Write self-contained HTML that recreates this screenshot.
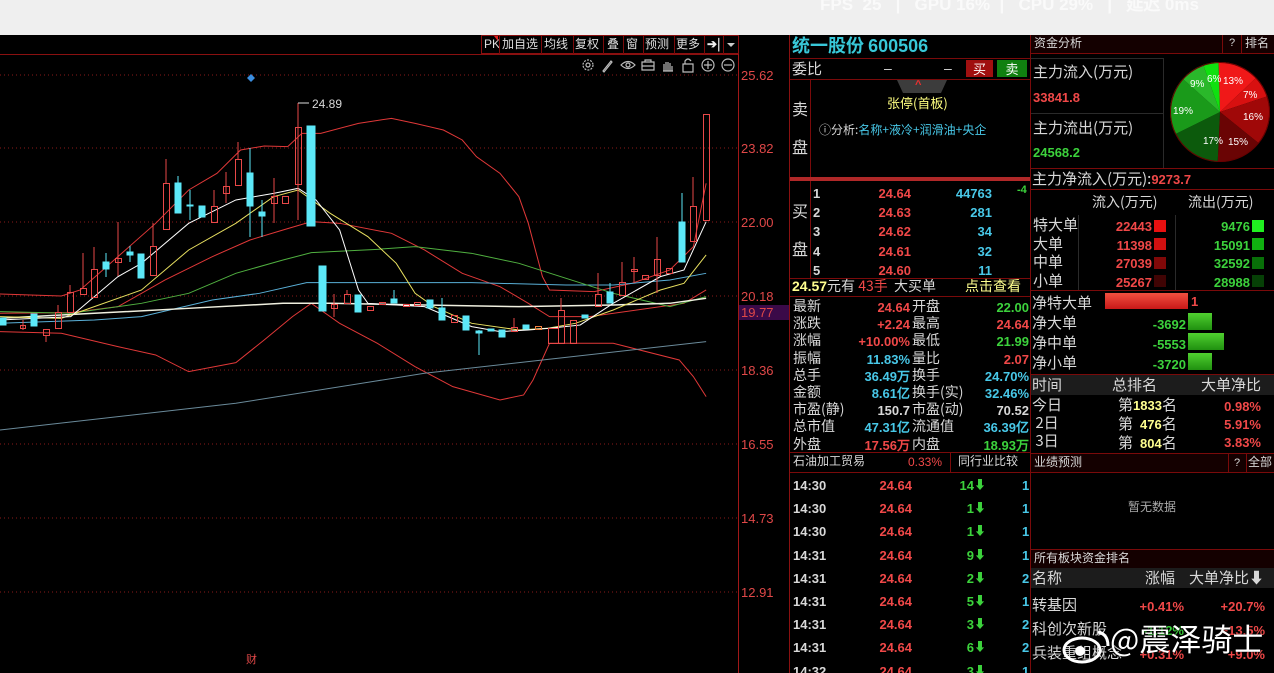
<!DOCTYPE html>
<html style="width:1274px;height:673px;overflow:hidden"><head><meta charset="utf-8">
<style>
*{margin:0;padding:0;box-sizing:border-box}
body{width:1274px;height:673px;overflow:hidden;background:#000;font-family:"Liberation Sans","Noto Sans CJK SC",sans-serif;position:relative;color:#d0d0d0}
.t{position:absolute;white-space:nowrap;line-height:1}
.c{font-family:"Noto Sans CJK SC","WenQuanYi Zen Hei",sans-serif}
.n{font-family:"Liberation Sans",sans-serif;font-weight:bold}
.r{color:#f04848}.g{color:#3cd23c}.cy{color:#48c8e8}.y{color:#ffff90}.w{color:#d8d8d8}
.hl{position:absolute;height:1px;background:#7a0a0a}
.vl{position:absolute;width:1px;background:#7a0a0a}
.ra{text-align:right}
.tb{position:absolute;top:38px;font-size:12px;color:#ddd;line-height:1;white-space:nowrap;font-family:"Noto Sans CJK SC",sans-serif}
</style></head><body>
<div style="position:absolute;left:0;top:0;width:1274px;height:35px;background:#efefef"></div>
<div class="t n" style="left:820px;top:-4px;font-size:17px;color:#fafafa">FPS &nbsp;25 &nbsp; | &nbsp; GPU 16% &nbsp;| &nbsp; CPU 29% &nbsp; | &nbsp; 延迟 0ms</div>

<!-- chart -->
<svg style="position:absolute;left:0;top:35px" width="790" height="638" viewBox="0 35 790 638">
<g stroke="#8a1a1a" stroke-dasharray="1 3" stroke-width="1">
<line x1="0" y1="75" x2="738" y2="75"/><line x1="0" y1="148" x2="738" y2="148"/><line x1="0" y1="222" x2="738" y2="222"/><line x1="0" y1="296" x2="738" y2="296"/><line x1="0" y1="370" x2="738" y2="370"/><line x1="0" y1="444" x2="738" y2="444"/><line x1="0" y1="518" x2="738" y2="518"/><line x1="0" y1="592" x2="738" y2="592"/>
</g>
<line x1="0" y1="54.5" x2="738" y2="54.5" stroke="#8a1010"/>
<line x1="738.5" y1="35" x2="738.5" y2="673" stroke="#a01818"/>
<g fill="none" stroke-width="1" transform="translate(0,90) scale(0.4717,0.3333)">
<polyline vector-effect="non-scaling-stroke" stroke="#e03838" points="0,612 130,618 170,600 250,500 330,400 400,300 460,250 510,180 560,168 610,170 640,130 680,130 760,100 830,85 880,100 940,120 980,150 1010,200 1060,250 1100,320 1120,400 1150,560 1165,600 1260,605 1340,580 1420,540 1470,470 1497,280"/>
<polyline vector-effect="non-scaling-stroke" stroke="#e03838" points="0,670 150,668 250,650 350,570 450,500 530,450 600,420 660,395 720,400 830,430 900,480 980,550 1060,590 1120,640 1165,680 1250,680 1350,660 1450,640 1497,600"/>
<polyline vector-effect="non-scaling-stroke" stroke="#e03838" points="0,725 130,730 250,770 330,795 400,845 500,818 560,750 620,680 660,640 720,700 800,760 880,830 960,890 1060,930 1110,915 1130,870 1165,760 1300,760 1440,810 1470,860 1497,920"/>
<polyline vector-effect="non-scaling-stroke" stroke="#6a8a9a" points="0,1020 500,940 900,850 1150,810 1497,755"/>
<polyline vector-effect="non-scaling-stroke" stroke="#5ab0d8" points="0,700 200,690 300,680 450,630 550,610 650,578 1000,578 1200,585 1300,585 1420,570 1497,550"/>
<polyline vector-effect="non-scaling-stroke" stroke="#50b040" points="0,665 150,670 300,640 400,610 500,550 600,510 660,488 800,478 880,470 1000,490 1100,520 1200,565 1300,610 1420,650 1497,620"/>
<polyline vector-effect="non-scaling-stroke" stroke="#f0f0e0" stroke-width="1.5" points="0,685 200,670 400,655 600,640 700,640 900,645 1100,650 1300,645 1420,640 1497,625"/>
<polyline vector-effect="non-scaling-stroke" stroke="#e8e060" points="0,680 130,685 200,650 300,600 400,480 500,400 580,320 632,300 700,370 780,440 840,520 880,610 920,650 1000,700 1100,720 1160,715 1220,700 1300,660 1400,600 1450,580 1497,495"/>
<polyline vector-effect="non-scaling-stroke" stroke="#ffffff" points="0,690 150,680 250,560 300,520 400,400 500,330 580,310 632,295 670,330 720,420 760,600 780,640 900,650 950,680 1000,710 1060,725 1120,720 1165,715 1230,705 1300,640 1400,560 1450,540 1497,395"/>
</g>
<g stroke="#e84848" fill="none">
<line x1="23" y1="320" x2="23" y2="330"/><rect x="20.5" y="325.5" width="5" height="3"/>
<rect x="43.5" y="329.5" width="6" height="6"/><line x1="46" y1="335" x2="46" y2="342"/>
<rect x="55.5" y="312.5" width="6" height="16"/><line x1="58" y1="305" x2="58" y2="312"/>
<rect x="67.5" y="292.5" width="6" height="20"/><line x1="70" y1="285" x2="70" y2="292"/>
<rect x="80.5" y="288.5" width="6" height="6"/><line x1="83" y1="253" x2="83" y2="288"/>
<rect x="91.5" y="269.5" width="6" height="28"/><line x1="94" y1="247" x2="94" y2="269"/>
<rect x="115.5" y="258.5" width="6" height="4"/><line x1="118" y1="222" x2="118" y2="276"/>
<rect x="150.5" y="246.5" width="6" height="29"/><line x1="153" y1="223" x2="153" y2="246"/>
<rect x="163.5" y="183.5" width="6" height="46"/><line x1="166" y1="159" x2="166" y2="183"/>
<rect x="211.5" y="206.5" width="6" height="16"/><line x1="214" y1="190" x2="214" y2="206"/>
<rect x="223.5" y="186.5" width="6" height="7"/><line x1="226" y1="172" x2="226" y2="203"/>
<rect x="235.5" y="159.5" width="6" height="26"/><line x1="238" y1="142" x2="238" y2="159"/>
<rect x="271.5" y="196.5" width="6" height="7"/><line x1="274" y1="178" x2="274" y2="223"/>
<rect x="282.5" y="196.5" width="6" height="7"/>
<rect x="295.5" y="127.5" width="6" height="57"/><line x1="298" y1="103" x2="298" y2="220"/>
<rect x="331.5" y="304.5" width="6" height="4"/><line x1="334" y1="294" x2="334" y2="317"/>
<rect x="344.5" y="294.5" width="6" height="9"/><line x1="347" y1="290" x2="347" y2="294"/>
<rect x="367.5" y="306.5" width="6" height="4"/>
<rect x="379.5" y="302.5" width="6" height="2"/>
<rect x="403.5" y="304.5" width="6" height="2"/>
<rect x="414.5" y="302.5" width="6" height="3"/>
<rect x="451.5" y="315.5" width="6" height="7"/>
<rect x="511.5" y="327.5" width="6" height="4"/><line x1="514" y1="318" x2="514" y2="327"/>
<rect x="535.5" y="326.5" width="6" height="3" stroke="#f08040"/>
<rect x="548.5" y="328.5" width="10" height="15"/>
<rect x="558.5" y="310.5" width="6" height="33"/><line x1="561" y1="298" x2="561" y2="310"/>
<rect x="570.5" y="320.5" width="6" height="23"/>
<rect x="595.5" y="294.5" width="6" height="12"/><line x1="598" y1="273" x2="598" y2="294"/>
<rect x="619.5" y="282.5" width="6" height="13"/><line x1="622" y1="262" x2="622" y2="282"/>
<rect x="631.5" y="269.5" width="6" height="2"/><line x1="634" y1="257" x2="634" y2="283"/>
<rect x="642.5" y="275.5" width="6" height="4"/>
<rect x="654.5" y="259.5" width="6" height="16"/><line x1="657" y1="237" x2="657" y2="293"/>
<rect x="666.5" y="268.5" width="6" height="5"/>
<rect x="690.5" y="206.5" width="6" height="35"/><line x1="693" y1="177" x2="693" y2="206"/>
<rect x="703.5" y="114.5" width="6" height="106"/>
</g>
<g fill="#5ce8f8" stroke="#5ce8f8">
<rect x="0" y="318" width="6" height="7"/>
<rect x="31" y="314" width="6" height="12"/>
<line x1="106" y1="253" x2="106" y2="277"/><rect x="103" y="262" width="6" height="7"/>
<line x1="130" y1="246" x2="130" y2="262"/><rect x="127" y="252" width="6" height="3"/>
<rect x="138" y="254" width="6" height="24"/>
<line x1="178" y1="176" x2="178" y2="213"/><rect x="175" y="183" width="6" height="30"/>
<line x1="190" y1="190" x2="190" y2="220"/><rect x="187" y="205" width="6" height="1"/>
<rect x="199" y="206" width="6" height="11"/>
<line x1="250" y1="148" x2="250" y2="237"/><rect x="247" y="173" width="6" height="33"/>
<line x1="262" y1="200" x2="262" y2="237"/><rect x="259" y="212" width="6" height="4"/>
<rect x="307" y="126" width="8" height="100"/>
<rect x="319" y="266" width="7" height="45"/>
<rect x="355" y="295" width="6" height="17"/>
<line x1="394" y1="290" x2="394" y2="303"/><rect x="391" y="299" width="6" height="4"/>
<rect x="427" y="300" width="6" height="8"/>
<line x1="442" y1="298" x2="442" y2="320"/><rect x="439" y="308" width="6" height="12"/>
<rect x="463" y="316" width="6" height="14"/>
<line x1="479" y1="330" x2="479" y2="355"/><rect x="476" y="331" width="6" height="2"/>
<rect x="488" y="329" width="6" height="2"/>
<rect x="499" y="330" width="6" height="7"/>
<rect x="523" y="325" width="6" height="4"/>
<rect x="582" y="315" width="6" height="3"/>
<line x1="610" y1="283" x2="610" y2="303"/><rect x="607" y="292" width="6" height="11"/>
<line x1="682" y1="193" x2="682" y2="262"/><rect x="679" y="222" width="6" height="40"/>
</g>
<line x1="298" y1="103" x2="309" y2="103" stroke="#ddd"/>
<text x="312" y="108" fill="#d8d8d8" font-size="12" font-family="Liberation Sans">24.89</text>
<path d="M251 74 l4 4 l-4 4 l-4 -4z" fill="#3a8ee0"/>
<g font-family="Liberation Sans" font-size="13" fill="#e04848">
<text x="741" y="80">25.62</text><text x="741" y="153">23.82</text><text x="741" y="227">22.00</text><text x="741" y="301">20.18</text><text x="741" y="375">18.36</text><text x="741" y="449">16.55</text><text x="741" y="523">14.73</text><text x="741" y="597">12.91</text>
</g>
<rect x="739" y="305" width="50" height="15" fill="#3a0a48"/>
<text x="741" y="317" fill="#e04848" font-size="13" font-family="Liberation Sans">19.77</text>
<text x="246" y="663" fill="#e04848" font-size="11" font-family="Noto Sans CJK SC">财</text>
<g fill="none" stroke="#bbb" stroke-width="1.2">
<circle cx="588" cy="65" r="5" stroke-dasharray="2 1.2"/><circle cx="588" cy="65" r="2"/>
<path d="M603 71 l8 -10 l1 1 l-8 10z"/>
<path d="M621 65 q7 -7 14 0 q-7 7 -14 0z"/><circle cx="628" cy="65" r="2"/>
<path d="M642 62 h12 v8 h-12z M645 62 v-2 h6 v2 M642 66 h12"/>
<path d="M664 71 v-7 M666 71 v-9 M668 71 v-9 M670 71 v-8 M672 71 v-5 M663 71 h10"/>
<path d="M683 64 h10 v8 h-10z M685 64 v-3 q3 -4 6 0"/>
<circle cx="708" cy="65" r="6"/><path d="M704 65 h8 M708 61 v8"/>
<circle cx="728" cy="65" r="6"/><path d="M724 65 h8"/>
</g>
</svg>
<!-- toolbar -->
<div style="position:absolute;left:481px;top:35px;width:258px;height:19px;border:1px solid #8a1010;background:#000"></div>
<div class="tb" style="left:484px;font-family:'Liberation Sans',sans-serif">PK</div>
<div class="tb" style="left:502px">加自选</div>
<div class="tb" style="left:544px">均线</div>
<div class="tb" style="left:575px">复权</div>
<div class="tb" style="left:607px">叠</div>
<div class="tb" style="left:626px">窗</div>
<div class="tb" style="left:645px">预测</div>
<div class="tb" style="left:676px">更多</div>
<div class="tb" style="left:707px;font-weight:bold;color:#eee">➔|</div>
<div style="position:absolute;left:494px;top:36px;width:0;height:0;border-left:4px solid transparent;border-top:5px solid #e02020"></div>
<div class="vl" style="left:499px;top:36px;height:18px"></div><div class="vl" style="left:541px;top:36px;height:18px"></div><div class="vl" style="left:573px;top:36px;height:18px"></div><div class="vl" style="left:603px;top:36px;height:18px"></div><div class="vl" style="left:623px;top:36px;height:18px"></div><div class="vl" style="left:643px;top:36px;height:18px"></div><div class="vl" style="left:674px;top:36px;height:18px"></div><div class="vl" style="left:704px;top:36px;height:18px"></div><div class="vl" style="left:723px;top:36px;height:18px"></div>
<div style="position:absolute;left:727px;top:43px;border-left:4px solid transparent;border-right:4px solid transparent;border-top:4px solid #ccc"></div>

<!-- left quote panel -->
<div class="vl" style="left:789px;top:35px;height:638px;background:#8a1010"></div>
<div class="vl" style="left:1030px;top:35px;height:638px"></div>
<div class="t c" style="left:792px;top:36px;font-size:18px;font-weight:bold;color:#38c8d8">统一股份 <span class="n">600506</span></div>
<div class="hl" style="left:790px;top:58px;width:240px"></div>
<div class="t c w" style="left:792px;top:61px;font-size:15px">委比</div>
<div class="t w" style="left:884px;top:61px;font-size:14px">–</div><div class="t w" style="left:944px;top:61px;font-size:14px">–</div>
<div class="t c" style="left:966px;top:60px;width:27px;height:17px;background:#a01010;color:#fff;font-size:13px;text-align:center;padding-top:2px">买</div>
<div class="t c" style="left:997px;top:60px;width:30px;height:17px;background:#108010;color:#fff;font-size:13px;text-align:center;padding-top:2px">卖</div>
<div class="hl" style="left:790px;top:79px;width:240px"></div>
<div class="vl" style="left:810px;top:79px;height:98px"></div>
<div class="t c w" style="left:792px;top:100px;font-size:16px">卖</div><div class="t c w" style="left:792px;top:138px;font-size:16px">盘</div>
<div style="position:absolute;left:897px;top:80px;width:50px;height:0;border-top:13px solid #3c3c3c;border-left:6px solid transparent;border-right:6px solid transparent"></div>
<div class="t" style="left:915px;top:80px;font-size:11px;color:#f03030;font-weight:bold">^</div>
<div class="t c" style="left:887px;top:96px;font-size:13px;color:#ffff80">张停(首板)</div>
<div class="t c" style="left:819px;top:124px;font-size:12px"><span class="w">ⓘ分析:</span><span class="cy">名称+液冷+润滑油+央企</span></div>
<div style="position:absolute;left:790px;top:177px;width:240px;height:4px;background:#b02828"></div>
<div class="vl" style="left:810px;top:181px;height:97px"></div>
<div class="t c w" style="left:792px;top:202px;font-size:16px">买</div><div class="t c w" style="left:792px;top:240px;font-size:16px">盘</div>
<div class="t n w" style="left:813px;top:184px;font-size:13px;line-height:19.2px">1<br>2<br>3<br>4<br>5</div>
<div class="t n r ra" style="left:850px;top:184px;width:61px;font-size:13px;line-height:19.2px">24.64<br>24.63<br>24.62<br>24.61<br>24.60</div>
<div class="t n cy ra" style="left:930px;top:184px;width:62px;font-size:13px;line-height:19.2px">44763<br>281<br>34<br>32<br>11</div>
<div class="t n g" style="left:1017px;top:185px;font-size:11px">-4</div>
<div class="hl" style="left:790px;top:278px;width:240px"></div>
<div class="t c" style="left:792px;top:279px;font-size:14px"><span class="y n">24.57</span><span class="w">元有</span> <span class="r">43手</span> <span class="w">&nbsp;大买单</span></div>
<div class="t c y" style="left:965px;top:279px;font-size:14px">点击查看</div>
<div class="hl" style="left:790px;top:296px;width:240px"></div>
<div class="t c w" style="left:793px;top:298px;font-size:14px;line-height:17.2px">最新<br>涨跌<br>涨幅<br>振幅<br>总手<br>金额<br>市盈(静)<br>总市值<br>外盘</div>
<div class="t n ra" style="left:840px;top:299px;width:70px;font-size:13px;line-height:17.2px"><span class="r">24.64</span><br><span class="r">+2.24</span><br><span class="r">+10.00%</span><br><span class="cy">11.83%</span><br><span class="cy">36.49万</span><br><span class="cy">8.61亿</span><br><span class="w">150.7</span><br><span class="cy">47.31亿</span><br><span class="r">17.56万</span></div>
<div class="t c w" style="left:912px;top:298px;font-size:14px;line-height:17.2px">开盘<br>最高<br>最低<br>量比<br>换手<br>换手(实)<br>市盈(动)<br>流通值<br>内盘</div>
<div class="t n ra" style="left:960px;top:299px;width:69px;font-size:13px;line-height:17.2px"><span class="g">22.00</span><br><span class="r">24.64</span><br><span class="g">21.99</span><br><span class="r">2.07</span><br><span class="cy">24.70%</span><br><span class="cy">32.46%</span><br><span class="w">70.52</span><br><span class="cy">36.39亿</span><br><span class="g">18.93万</span></div>
<div class="hl" style="left:790px;top:452px;width:240px"></div>
<div class="t c w" style="left:793px;top:455px;font-size:12px">石油加工贸易</div>
<div class="t r" style="left:908px;top:456px;font-size:12px">0.33%</div>
<div class="vl" style="left:950px;top:452px;height:20px"></div>
<div class="t c w" style="left:958px;top:455px;font-size:12px">同行业比较</div>
<div class="hl" style="left:790px;top:472px;width:240px"></div>
<div class="t n w" style="left:793px;top:474px;font-size:13px;line-height:23.2px">14:30<br>14:30<br>14:30<br>14:31<br>14:31<br>14:31<br>14:31<br>14:31<br>14:32</div>
<div class="t n r ra" style="left:850px;top:474px;width:62px;font-size:13px;line-height:23.2px">24.64<br>24.64<br>24.64<br>24.64<br>24.64<br>24.64<br>24.64<br>24.64<br>24.64</div>
<div class="t n g ra" style="left:940px;top:474px;width:34px;font-size:13px;line-height:23.2px">14<br>1<br>1<br>9<br>2<br>5<br>3<br>6<br>3</div>
<div class="t g" style="left:974px;top:474px;font-size:12px;line-height:23.2px">⬇<br>⬇<br>⬇<br>⬇<br>⬇<br>⬇<br>⬇<br>⬇<br>⬇</div>
<div class="t n cy" style="left:1022px;top:474px;font-size:13px;line-height:23.2px">1<br>1<br>1<br>1<br>2<br>1<br>2<br>2<br>1</div>

<!-- right panel -->
<div style="position:absolute;left:1031px;top:35px;width:243px;height:19px;background:#140000;border-bottom:1px solid #7a0a0a"></div>
<div class="t c w" style="left:1034px;top:37px;font-size:12px">资金分析</div>
<div class="vl" style="left:1222px;top:35px;height:19px"></div><div class="vl" style="left:1241px;top:35px;height:19px"></div>
<div class="t w" style="left:1229px;top:38px;font-size:11px">?</div><div class="t c w" style="left:1245px;top:37px;font-size:12px">排名</div>
<div class="hl" style="left:1031px;top:58px;width:132px;background:#2a2a2a"></div>
<div class="vl" style="left:1163px;top:58px;height:110px;background:#2a2a2a"></div>
<div class="t c w" style="left:1033px;top:64px;font-size:15px">主力流入(万元)</div>
<div class="t n r" style="left:1033px;top:91px;font-size:13px">33841.8</div>
<div class="hl" style="left:1031px;top:113px;width:132px;background:#2a2a2a"></div>
<div class="t c w" style="left:1033px;top:120px;font-size:15px">主力流出(万元)</div>
<div class="t n g" style="left:1033px;top:146px;font-size:13px">24568.2</div>
<svg style="position:absolute;left:1170px;top:62px" width="100" height="100" viewBox="0 0 100 100">
<g transform="rotate(-90 50 50)" fill="none" stroke-width="50">
<circle cx="50" cy="50" r="25" pathLength="100" stroke="#f01818" stroke-dasharray="13 87"/>
<circle cx="50" cy="50" r="25" pathLength="100" stroke="#d81010" stroke-dasharray="7 93" stroke-dashoffset="-13"/>
<circle cx="50" cy="50" r="25" pathLength="100" stroke="#a00808" stroke-dasharray="16 84" stroke-dashoffset="-20"/>
<circle cx="50" cy="50" r="25" pathLength="100" stroke="#6a0404" stroke-dasharray="15 85" stroke-dashoffset="-36"/>
<circle cx="50" cy="50" r="25" pathLength="100" stroke="#0c5a0c" stroke-dasharray="17 83" stroke-dashoffset="-51"/>
<circle cx="50" cy="50" r="25" pathLength="100" stroke="#1a9a1a" stroke-dasharray="19 81" stroke-dashoffset="-68"/>
<circle cx="50" cy="50" r="25" pathLength="100" stroke="#2ab82a" stroke-dasharray="8 92" stroke-dashoffset="-87"/>
<circle cx="50" cy="50" r="25" pathLength="100" stroke="#10e010" stroke-dasharray="5 95" stroke-dashoffset="-95"/>
</g>
<circle cx="50" cy="50" r="49.5" fill="none" stroke="#600" stroke-width="1"/>
<g font-family="Liberation Sans" font-size="10" fill="#fff">
<text x="53" y="22">13%</text><text x="73" y="36">7%</text><text x="73" y="58">16%</text><text x="58" y="83">15%</text><text x="33" y="82">17%</text><text x="3" y="52">19%</text><text x="20" y="25">9%</text><text x="37" y="20">6%</text>
</g>
</svg>
<div class="hl" style="left:1031px;top:168px;width:243px"></div>
<div class="t c w" style="left:1032px;top:171px;font-size:15px">主力净流入(万元):<span class="n r" style="font-size:13px">9273.7</span></div>
<div class="hl" style="left:1031px;top:189px;width:243px"></div>
<div class="t c w" style="left:1092px;top:195px;font-size:14px">流入(万元)</div><div class="t c w" style="left:1188px;top:195px;font-size:14px">流出(万元)</div>
<div class="t c w" style="left:1033px;top:216px;font-size:15px;line-height:18.6px">特大单<br>大单<br>中单<br>小单</div>
<div class="vl" style="left:1078px;top:215px;height:75px;background:#2a2a2a"></div>
<div class="vl" style="left:1175px;top:215px;height:75px;background:#2a2a2a"></div>
<div class="t n r ra" style="left:1090px;top:218px;width:62px;font-size:13px;line-height:18.6px">22443<br>11398<br>27039<br>25267</div>
<div class="t n g ra" style="left:1190px;top:218px;width:60px;font-size:13px;line-height:18.6px">9476<br>15091<br>32592<br>28988</div>
<div style="position:absolute;left:1154px;top:220px;width:12px;height:12px;background:#e81010"></div>
<div style="position:absolute;left:1154px;top:238px;width:12px;height:12px;background:#d01010"></div>
<div style="position:absolute;left:1154px;top:257px;width:12px;height:12px;background:#800808"></div>
<div style="position:absolute;left:1154px;top:275px;width:12px;height:12px;background:#400404"></div>
<div style="position:absolute;left:1252px;top:220px;width:12px;height:12px;background:#20f020"></div>
<div style="position:absolute;left:1252px;top:238px;width:12px;height:12px;background:#10b010"></div>
<div style="position:absolute;left:1252px;top:257px;width:12px;height:12px;background:#087008"></div>
<div style="position:absolute;left:1252px;top:275px;width:12px;height:12px;background:#064006"></div>
<div class="hl" style="left:1031px;top:290px;width:243px"></div>
<div class="t c w" style="left:1032px;top:293px;font-size:15px;line-height:20px">净特大单<br>净大单<br>净中单<br>净小单</div>
<div style="position:absolute;left:1105px;top:293px;width:83px;height:16px;background:linear-gradient(#f05040,#c81818)"></div>
<div class="t n r" style="left:1191px;top:295px;font-size:13px">1</div>
<div class="t n g ra" style="left:1130px;top:315px;width:56px;font-size:13px;line-height:20px">-3692<br>-5553<br>-3720</div>
<div style="position:absolute;left:1188px;top:313px;width:24px;height:17px;background:linear-gradient(#50d030,#209010)"></div>
<div style="position:absolute;left:1188px;top:333px;width:36px;height:17px;background:linear-gradient(#50d030,#209010)"></div>
<div style="position:absolute;left:1188px;top:353px;width:24px;height:17px;background:linear-gradient(#50d030,#209010)"></div>
<div class="hl" style="left:1031px;top:374px;width:243px"></div>
<div style="position:absolute;left:1031px;top:375px;width:243px;height:20px;background:#1c1c1c"></div>
<div class="t c w" style="left:1032px;top:377px;font-size:15px">时间</div><div class="t c w" style="left:1112px;top:377px;font-size:15px">总排名</div><div class="t c w" style="left:1201px;top:377px;font-size:15px">大单净比</div>
<div class="t c w" style="left:1032px;top:396px;font-size:15px;line-height:18px">今日<br>&nbsp;2日<br>&nbsp;3日</div>
<div class="t c w" style="left:1118px;top:396px;font-size:15px;line-height:18px">第<span class="n y" style="font-size:13px">1833</span>名<br>第 <span class="n y" style="font-size:13px">&nbsp;476</span>名<br>第 <span class="n y" style="font-size:13px">&nbsp;804</span>名</div>
<div class="t n r ra" style="left:1200px;top:398px;width:61px;font-size:13px;line-height:18px">0.98%<br>5.91%<br>3.83%</div>
<div style="position:absolute;left:1031px;top:452px;width:243px;height:22px;background:#000"></div>
<div style="position:absolute;left:1031px;top:453px;width:243px;height:20px;background:#140000;border-top:1px solid #7a0a0a;border-bottom:1px solid #7a0a0a"></div>
<div class="t c w" style="left:1034px;top:456px;font-size:12px">业绩预测</div>
<div class="vl" style="left:1228px;top:453px;height:20px"></div><div class="vl" style="left:1246px;top:453px;height:20px"></div>
<div class="t w" style="left:1234px;top:458px;font-size:11px">?</div><div class="t c w" style="left:1248px;top:456px;font-size:12px">全部</div>
<div class="t c" style="left:1128px;top:501px;font-size:12px;color:#aaa">暂无数据</div>
<div class="hl" style="left:1031px;top:549px;width:243px"></div>
<div style="position:absolute;left:1031px;top:550px;width:243px;height:18px;background:#140000"></div>
<div class="t c w" style="left:1034px;top:552px;font-size:12px">所有板块资金排名</div>
<div style="position:absolute;left:1031px;top:568px;width:243px;height:20px;background:#1c1c1c"></div>
<div class="t c w" style="left:1032px;top:570px;font-size:15px">名称</div><div class="t c w" style="left:1145px;top:570px;font-size:15px">涨幅</div><div class="t c w" style="left:1189px;top:570px;font-size:15px">大单净比⬇</div>
<div class="t c w" style="left:1032px;top:593px;font-size:15px;line-height:24px">转基因<br>科创次新股<br>兵装重组概念</div>
<div class="t n ra" style="left:1120px;top:595px;width:64px;font-size:13px;line-height:24px"><span class="r">+0.41%</span><br><span class="g">-1.12%</span><br><span class="r">+0.31%</span></div>
<div class="t n r ra" style="left:1200px;top:595px;width:65px;font-size:13px;line-height:24px">+20.7%<br>+13.5%<br>+9.0%</div>
<!-- watermark -->
<svg style="position:absolute;left:1058px;top:626px" width="56" height="40" viewBox="0 0 56 40">
<ellipse cx="24" cy="24" rx="18" ry="12" fill="none" stroke="#fff" stroke-width="3"/>
<circle cx="22" cy="25" r="5" fill="#fff"/>
<path d="M40 6 q10 2 10 14" fill="none" stroke="#fff" stroke-width="3"/>
</svg>
<div class="t c" style="left:1110px;top:622px;font-size:31px;color:#fff;text-shadow:0 0 2px #000">@震泽骑士</div>
</body></html>
